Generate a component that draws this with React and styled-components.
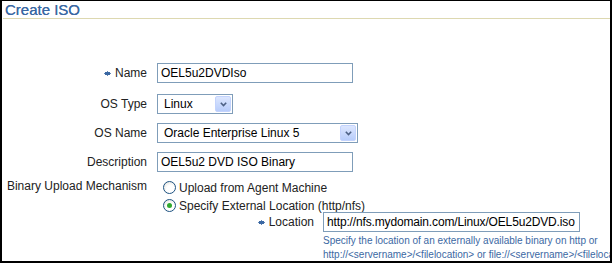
import React from "react"
import styled, { createGlobalStyle } from "styled-components"

const GlobalStyle = createGlobalStyle`
	html, body {
		margin: 0;
		padding: 0;
		background: #fff;
	}
	body {
		font-family: "Liberation Sans", Arial, sans-serif;
		font-size: 12px;
		color: #000;
	}
`

const Frame = styled.div`
	box-sizing: border-box;
	width: 612px;
	height: 263px;
	border-top: 1px solid #000;
	border-left: 2px solid #000;
	border-right: 2px solid #000;
	border-bottom: 2px solid #000;
	overflow: hidden;
	display: flex;
	flex-direction: column;
`

const Title = styled.h1`
	margin: 0 0 0 1px;
	padding: 0 0 0 2px;
	height: 17px;
	line-height: 17px;
	font-size: 15px;
	font-weight: normal;
	color: #3b68a3;
	border-bottom: 1px solid #ddd8b0;
	text-shadow: 0 0 0.2px #3b68a3;
`

const Form = styled.div`
	display: flex;
	flex-direction: column;
	margin-top: 44px;
`

const Row = styled.div`
	display: grid;
	grid-template-columns: 145px 1fr;
	column-gap: 10px;
	align-items: ${(p) => (p.top ? "start" : "center")};
	margin-bottom: ${(p) => p.gap ?? 9}px;
`

const Label = styled.div`
	display: flex;
	justify-content: flex-end;
	align-items: center;
	gap: 4px;
	white-space: nowrap;
	color: #222;
	height: ${(p) => (p.h ? `${p.h}px` : "auto")};
	padding-top: ${(p) => p.pt || 0}px;
`

const Star = () => (
	<svg width="7" height="7" viewBox="0 0 7 7">
		<rect x="1" y="2" width="5" height="3" fill="#3b68a3" />
		<path d="M0 3.5h7M3.5 1v5" stroke="#3b68a3" strokeWidth="0.8" />
	</svg>
)

const TextInput = styled.div`
	box-sizing: border-box;
	width: ${(p) => p.w}px;
	height: 20px;
	border: 1px solid #7f9db9;
	padding: 0 3px;
	line-height: 18px;
	font-size: 12px;
	letter-spacing: ${(p) => p.ls || 0}px;
	white-space: nowrap;
	overflow: hidden;
`

const Select = styled.div`
	box-sizing: border-box;
	width: ${(p) => p.w}px;
	height: 20px;
	border: 1px solid #7f9db9;
	display: flex;
	align-items: center;
	padding: 1px;
`

const SelectText = styled.span`
	flex: 1;
	padding-left: 5px;
	line-height: 16px;
	white-space: nowrap;
`

const SelectButton = styled.span`
	width: 16px;
	height: 16px;
	box-sizing: border-box;
	border: 1px solid #c3d3fd;
	border-radius: 2px;
	background: linear-gradient(#dce6fe, #b8cdfb);
	display: flex;
	align-items: center;
	justify-content: center;
`

const Chevron = () => (
	<svg width="7" height="5" viewBox="0 0 7 5">
		<path d="M0.8 0.8 L3.5 3.5 L6.2 0.8" fill="none" stroke="#4d6185" strokeWidth="1.6" />
	</svg>
)

const Options = styled.div`
	display: flex;
	flex-direction: column;
	padding-left: 6px;
`

const Option = styled.div`
	display: flex;
	align-items: center;
	gap: 3px;
	height: 17px;
	color: #222;
	padding-top: 1px;
`

const Radio = styled.span`
	box-sizing: border-box;
	width: 13px;
	height: 13px;
	border-radius: 50%;
	border: 1px solid #1d5281;
	background: radial-gradient(circle at 60% 65%, #fff 40%, #dcdcd5 100%);
	display: flex;
	align-items: center;
	justify-content: center;

	&::after {
		content: "";
		width: 5px;
		height: 5px;
		border-radius: 50%;
		background: ${(p) => (p.checked ? "#2fa82f" : "transparent")};
	}
`

const SubRow = styled.div`
	display: grid;
	grid-template-columns: 157px 1fr;
	column-gap: 9px;
	align-items: start;
	margin-left: -6px;
	margin-top: -2px;
`

const Help = styled.div`
	color: #3b68a3;
	font-size: 10px;
	line-height: 14px;
	padding-top: 2px;
	white-space: nowrap;
`

export default function App() {
	return (
		<>
			<GlobalStyle />
			<Frame>
				<Title>Create ISO</Title>
				<Form>
					<Row gap={11}>
						<Label>
							<Star />
							Name
						</Label>
						<TextInput w={196}>OEL5u2DVDIso</TextInput>
					</Row>
					<Row>
						<Label>OS Type</Label>
						<Select w={76}>
							<SelectText>Linux</SelectText>
							<SelectButton>
								<Chevron />
							</SelectButton>
						</Select>
					</Row>
					<Row>
						<Label>OS Name</Label>
						<Select w={201}>
							<SelectText>Oracle Enterprise Linux 5</SelectText>
							<SelectButton>
								<Chevron />
							</SelectButton>
						</Select>
					</Row>
					<Row gap={6}>
						<Label>Description</Label>
						<TextInput w={196}>OEL5u2 DVD ISO Binary</TextInput>
					</Row>
					<Row top gap={0}>
						<Label pt={1}>Binary Upload Mechanism</Label>
						<Options>
							<Option>
								<Radio />
								Upload from Agent Machine
							</Option>
							<Option>
								<Radio checked />
								Specify External Location (http/nfs)
							</Option>
							<SubRow>
								<Label h={20}>
									<Star />
									Location
								</Label>
								<div>
									<TextInput w={257} ls={-0.15}>
										http://nfs.mydomain.com/Linux/OEL5u2DVD.iso
									</TextInput>
									<Help>
										Specify the location of an externally available binary on http or
										<br />
										http://&lt;servername&gt;/&lt;filelocation&gt; or file://&lt;servername&gt;/&lt;filelocation&gt;
									</Help>
								</div>
							</SubRow>
						</Options>
					</Row>
				</Form>
			</Frame>
		</>
	)
}
